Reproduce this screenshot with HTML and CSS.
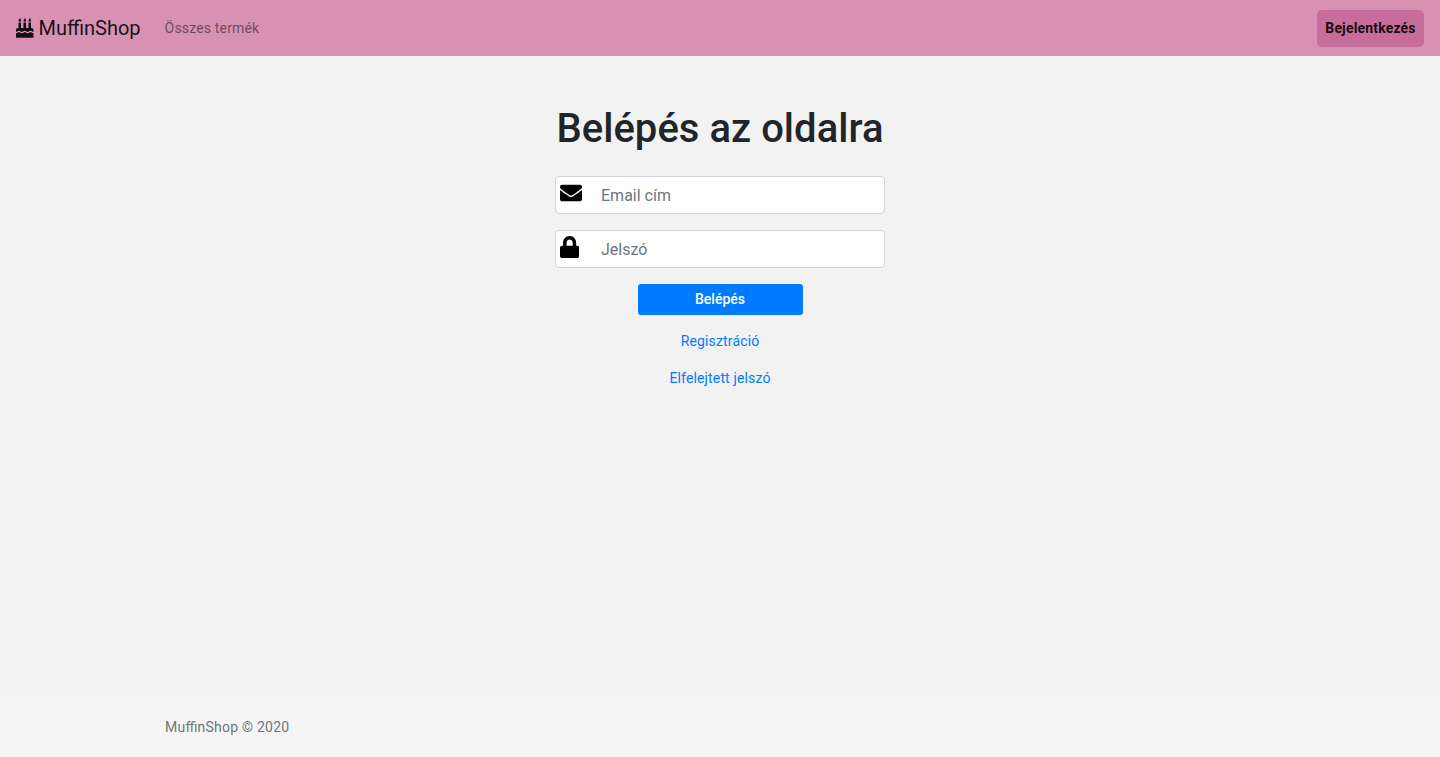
FILE: index.html
```html
<!DOCTYPE html>
<html lang="hu">
<head>
<meta charset="utf-8">
<title>MuffinShop</title>
<link rel="stylesheet" href="styles.css">
</head>
<body>
<nav class="navbar">
  <a class="brand"><svg class="cake" viewBox="0 0 448 512"><path fill="currentColor" d="M448 356c-28.020 0-31.260-32-74.500-32-43.430 0-46.825 32-74.750 32-27.695 0-31.454-32-74.750-32-42.842 0-47.218 32-74.500 32-28.148 0-31.202-32-74.750-32-43.547 0-46.653 32-74.750 32v-52c0-26.500 21.500-48 48-48h16V112h64v144h64V112h64v144h64V112h64v144h16c26.500 0 48 21.500 48 48v52zm0 148H0v-116c43.356 0 46.767-32 74.750-32 27.951 0 31.253 32 74.750 32 42.843 0 47.217-32 74.500-32 28.148 0 31.201 32 74.750 32 43.357 0 46.767-32 74.750-32 27.488 0 31.252 32 74.500 32v116zM96 96c-17.750 0-32-14.250-32-32 0-31 32-23 32-64 12 0 32 29.500 32 56s-14.250 40-32 40zm128 0c-17.750 0-32-14.250-32-32 0-31 32-23 32-64 12 0 32 29.500 32 56s-14.250 40-32 40zm128 0c-17.750 0-32-14.250-32-32 0-31 32-23 32-64 12 0 32 29.500 32 56s-14.250 40-32 40z"/></svg> MuffinShop</a>
  <a class="nav-link">Összes termék</a>
  <a class="login">Bejelentkezés</a>
</nav>
<main class="main">
  <h1 class="title">Belépés az oldalra</h1>
  <form class="form">
    <div class="field"><svg class="icon" width="22" height="22" viewBox="0 0 512 512"><path d="M502.300 190.800c3.900-3.100 9.700-.2 9.700 4.700V400c0 26.500-21.500 48-48 48H48c-26.500 0-48-21.500-48-48V195.600c0-5 5.700-7.800 9.700-4.700 22.400 17.400 52.100 39.500 154.100 113.600 21.100 15.400 56.700 47.800 92.200 47.600 35.700.3 72-32.800 92.300-47.600 102-74.100 131.600-96.300 154-113.700zM256 320c23.200.4 56.600-29.200 73.400-41.400 132.700-96.300 142.800-104.700 173.400-128.700 5.800-4.500 9.200-11.500 9.200-18.900v-19c0-26.500-21.500-48-48-48H48c-26.500 0-48 21.500-48 48v19c0 7.400 3.400 14.300 9.200 18.900 30.600 23.900 40.700 32.400 173.400 128.700 16.800 12.200 50.200 41.800 73.400 41.400z"/></svg><input class="input" type="email" placeholder="Email cím"></div>
    <div class="field"><svg class="icon" width="19.250" height="22" viewBox="0 0 448 512"><path d="M400 224h-24v-72C376 68.200 307.800 0 224 0S72 68.200 72 152v72H48c-26.500 0-48 21.500-48 48v192c0 26.500 21.500 48 48 48h352c26.500 0 48-21.500 48-48V272c0-26.500-21.500-48-48-48zm-104 0H152v-72c0-39.700 32.300-72 72-72s72 32.300 72 72v72z"/></svg><input class="input" type="password" placeholder="Jelszó"></div>
    <button class="submit" type="button">Belépés</button>
    <a class="link">Regisztráció</a>
    <a class="link">Elfelejtett jelszó</a>
  </form>
</main>
<footer class="footer"><span class="copy">MuffinShop © 2020</span></footer>
</body>
</html>
```
FILE: styles.css
```css
* { box-sizing: border-box; }
body {
  margin: 0;
  min-height: 100vh;
  display: flex;
  flex-direction: column;
  background: #f2f2f2;
  color: #212529;
  font: 400 14px/21px Roboto, sans-serif;
}
.navbar {
  display: flex;
  align-items: center;
  height: 56px;
  padding: 0 16px;
  background: #d891b3;
}
.brand {
  font-size: 20px;
  line-height: 30px;
  color: rgba(0, 0, 0, .9);
  white-space: nowrap;
}
.cake { width: 17.5px; height: 20px; vertical-align: -2.5px; }
.nav-link {
  margin-left: 24px;
  color: rgba(0, 0, 0, .5);
  letter-spacing: .17px;
}
.login {
  width: 107px;
  margin-left: auto;
  padding: 8px 0;
  border-radius: 5px;
  background: #c76d9c;
  color: rgba(0, 0, 0, .9);
  font-weight: 700;
  text-align: center;
  letter-spacing: .17px;
}
.main { flex: 1; padding-top: 49px; }
.title {
  margin: 0 0 23px;
  text-align: center;
  font-size: 40px;
  line-height: 48px;
  font-weight: 500;
  letter-spacing: .03px;
}
.form {
  width: 330px;
  margin: 0 auto;
  display: flex;
  flex-direction: column;
  align-items: center;
}
.field { position: relative; width: 100%; height: 38px; margin-bottom: 16px; }
.icon { position: absolute; left: 5px; top: 6px; fill: #000; }
.input {
  display: block;
  width: 100%;
  height: 38px;
  padding: 6px 12px 6px 45px;
  border: 1px solid #ced4da;
  border-radius: 4px;
  background: #fff;
  font: 400 16px/24px Roboto, sans-serif;
}
.input::placeholder { color: #6c757d; opacity: 1; }
.submit {
  width: 165px;
  height: 31px;
  margin-bottom: 16px;
  padding: 0;
  border: 0;
  border-radius: 3px;
  background: #007bff;
  color: #fff;
  font: 500 14px/21px Roboto, sans-serif;
}
.link {
  margin-bottom: 16px;
  color: #007bff;
  letter-spacing: .15px;
}
.footer {
  height: 60px;
  padding: 0 165px;
  background: #f5f5f5;
  line-height: 60px;
}
.copy {
  color: #6c757d;
  letter-spacing: .23px;
  font-feature-settings: "liga" 1;
}
```
